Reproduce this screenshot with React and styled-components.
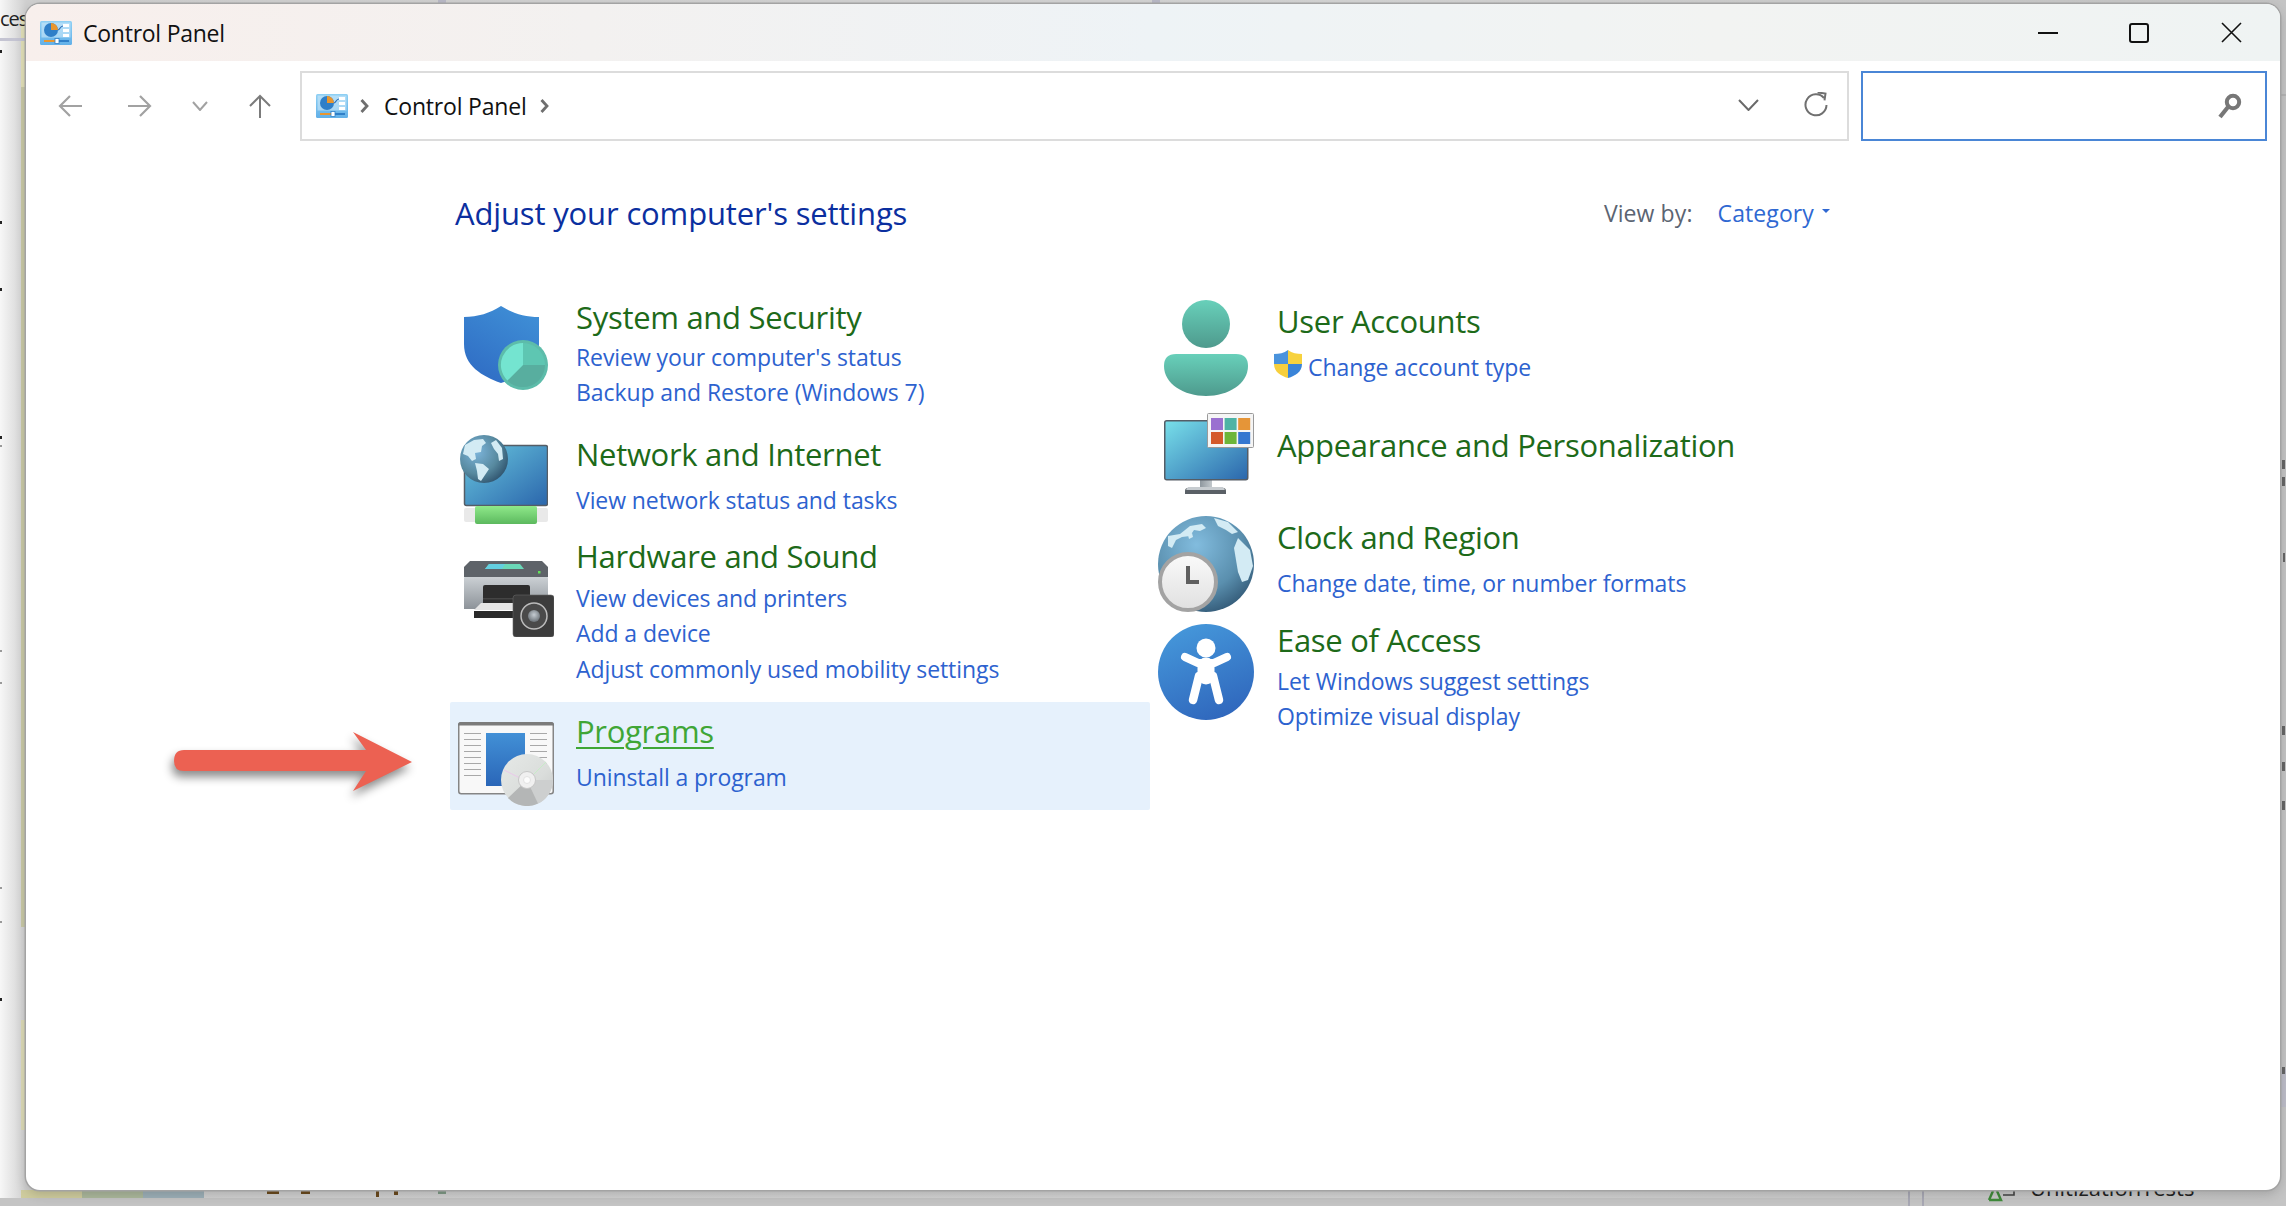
import React from 'react';
import styled, { createGlobalStyle } from 'styled-components';

const UI_FONT = '"Open Sans", "Noto Sans", "Liberation Sans", sans-serif';

const GlobalStyle = createGlobalStyle`
  html, body {
    margin: 0;
    padding: 0;
    width: 2286px;
    height: 1206px;
    overflow: hidden;
    font-family: ${UI_FONT};
  }
`;

const Page = styled.div`
  position: relative;
  box-sizing: border-box;
  width: 2286px;
  height: 1206px;
  padding: 4px 6px 16px 26px;
  overflow: hidden;
  background: linear-gradient(90deg, #f7f7f7 0, #cfcfcf 26px, #d4d4d4 60%, #c4c4c4 100%);
`;

// bits of the desktop showing behind the window
const BackdropBar = styled.div`
  position: absolute;
  left: ${p => p.$x}px;
  top: ${p => p.$y}px;
  width: ${p => p.$w}px;
  height: ${p => p.$h}px;
  background: ${p => p.$c};
`;

const BackdropText = styled.span`
  position: absolute;
  left: ${p => p.$x}px;
  top: ${p => p.$y}px;
  font-size: ${p => p.$size}px;
  letter-spacing: ${p => p.$track || 0}px;
  line-height: 30px;
  color: #222;
  white-space: nowrap;
`;

const BackdropIcon = styled.svg`
  position: absolute;
  left: ${p => p.$x}px;
  top: ${p => p.$y}px;
`;

const Window = styled.div`
  position: relative;
  display: flex;
  flex-direction: column;
  height: 100%;
  background: #fff;
  border-radius: 14px;
  overflow: hidden;
  box-shadow: 0 0 0 1.5px #a3a3a3, 0 4px 12px rgba(0, 0, 0, 0.18);
`;

const TitleBar = styled.div`
  display: flex;
  align-items: center;
  flex: none;
  height: 57px;
  padding: 0 2px 0 14px;
  background: linear-gradient(90deg, #f8efec 0, #f3f1f0 25%, #eef3f6 50%, #f2f3f2 75%, #eff3f3 100%);
`;

const WindowTitle = styled.span`
  margin-left: 11px;
  font-size: 23px;
  letter-spacing: -0.25px;
  color: #111;
  flex: 1;
`;

const WindowButton = styled.div`
  display: flex;
  align-items: center;
  justify-content: center;
  width: ${p => p.$w}px;
  height: 57px;
`;

const Toolbar = styled.div`
  display: flex;
  flex: none;
  align-items: stretch;
  height: 70px;
  margin-top: 10px;
  padding-right: 13px;
`;

const NavGroup = styled.div`
  display: grid;
  flex: none;
  grid-template-columns: 80px 60px 60px 60px;
  width: 270px;
  padding-left: 4px;
`;

const NavButton = styled.div`
  display: flex;
  align-items: center;
  justify-content: center;
`;

const AddressBar = styled.div`
  display: flex;
  align-items: center;
  flex: 1;
  padding: 0 19px 0 14px;
  border: 2px solid #dcdcdc;
`;

const Gap = styled.span`
  flex: none;
  width: ${p => p.$w}px;
`;

const Raised = styled.span`
  display: inline-flex;
  margin-bottom: 3px;
`;

const Crumb = styled.span`
  margin: 0 13px 0 15px;
  font-size: 23px;
  letter-spacing: -0.2px;
  color: #111;
`;

const AddressSpacer = styled.div`
  flex: 1;
`;

const SearchBox = styled.div`
  display: flex;
  align-items: center;
  justify-content: flex-end;
  flex: none;
  box-sizing: border-box;
  width: 406px;
  margin-left: 12px;
  padding-right: 23px;
  border: 2px solid #4a86d6;
`;

const HeadRow = styled.div`
  display: flex;
  align-items: center;
  justify-content: space-between;
  width: 1375px;
  height: 40px;
  margin: 52px 0 0 429px;
`;

const Heading = styled.h1`
  margin: 0;
  font-size: 31px;
  font-weight: 400;
  letter-spacing: -0.15px;
  color: #0b2f9f;
`;

const ViewBy = styled.div`
  display: flex;
  align-items: center;
  font-size: 23px;
  letter-spacing: 0.1px;
  color: #5b6472;
`;

const ViewByValue = styled.span`
  margin-left: 25px;
  color: #2f68d2;
`;

const ViewByCaret = styled.span`
  width: 0;
  height: 0;
  margin: 0 0 4px 8px;
  border-left: 4px solid transparent;
  border-right: 4px solid transparent;
  border-top: 4px solid #2f68d2;
`;

const Columns = styled.div`
  display: flex;
  margin: 67px 0 0 424px;
`;

const Column = styled.div`
  display: flex;
  flex-direction: column;
  flex: none;
  width: 700px;
`;

const Item = styled.div`
  display: grid;
  grid-template-columns: ${p => p.$iconCol || 126}px 1fr;
  height: ${p => p.$h}px;
  border-radius: 2px;
  background: ${p => (p.$active ? '#e6f1fc' : 'transparent')};
`;

const IconCell = styled.div`
  margin: ${p => p.$y || 0}px 0 0 ${p => p.$x || 14}px;
  line-height: 0;
`;

const TextCell = styled.div`
  padding-top: ${p => p.$pad || 0}px;
`;

const ItemTitle = styled.a`
  display: block;
  width: max-content;
  height: 36px;
  margin: -1px 0 ${p => (p.$gap || 9) + 1}px;
  font-size: 31px;
  line-height: 36px;
  letter-spacing: -0.3px;
  color: ${p => (p.$active ? '#3fa636' : '#1d6a19')};
  text-decoration: ${p => (p.$active ? 'underline' : 'none')};
  text-decoration-thickness: 2px;
  text-underline-offset: 4px;
`;

const ItemLink = styled.a`
  display: flex;
  align-items: center;
  height: 35.5px;
  font-size: 23px;
  letter-spacing: -0.08px;
  color: #2d62cf;
  text-decoration: none;
  white-space: nowrap;
`;

const ShieldSlot = styled.span`
  display: inline-flex;
  margin: -5px 6px 0 -3px;
`;

const ArrowMark = styled.svg`
  position: absolute;
  left: 148px;
  top: 724px;
  overflow: visible;
  filter: drop-shadow(-2px 6px 5px rgba(0, 0, 0, 0.45));
`;

const stroke = { fill: 'none', strokeLinecap: 'round', strokeLinejoin: 'round' };

function ControlPanelIcon() {
  return (
    <svg width="32" height="24" viewBox="0 0 32 24">
      <defs>
        <linearGradient id="cpBg" x1="0" y1="0" x2="0" y2="1">
          <stop offset="0" stopColor="#8fd0f4" />
          <stop offset="1" stopColor="#62b0e8" />
        </linearGradient>
      </defs>
      <rect width="32" height="24" rx="1.5" fill="url(#cpBg)" />
      <rect x="1.5" y="1.5" width="29" height="15" fill="#d5edfb" opacity="0.55" />
      <circle cx="11" cy="9" r="7" fill="#2f7fc8" />
      <path d="M11 2 A7 7 0 0 1 18 9 H11Z" fill="#e8962f" />
      <path d="M18 9 C20 9 20 5 23 5" stroke="#2f6fb8" strokeWidth="1.2" fill="none" />
      <rect x="23" y="3" width="6" height="3" fill="#fff" />
      <rect x="23" y="8" width="6" height="3" fill="#fff" />
      <rect x="23" y="13" width="6" height="3" fill="#fff" />
      <rect x="4" y="19" width="13" height="2" fill="#e8962f" />
      <rect x="17" y="19" width="12" height="2" fill="#2f7fc8" />
      <rect x="15" y="17.5" width="4" height="5" fill="#fff" stroke="#2f7fc8" strokeWidth="0.8" />
    </svg>
  );
}

function ShieldIcon() {
  return (
    <svg width="84" height="84" viewBox="0 0 84 84">
      <defs>
        <linearGradient id="shieldBlue" x1="0.8" y1="0" x2="0.2" y2="1">
          <stop offset="0" stopColor="#3f8fd6" />
          <stop offset="1" stopColor="#2f6cc4" />
        </linearGradient>
      </defs>
      <path d="M0 11 C14 11 26 7 37 0 C48 7 60 11 75 11 V38 C75 60 56 72 37 77 C18 70 0 60 0 38Z" fill="url(#shieldBlue)" />
      <circle cx="59" cy="59" r="25" fill="#5dbcaa" />
      <path d="M59 37 A22 22 0 0 1 81 59 H59Z" fill="#5ec6b2" />
      <path d="M81 59 A22 22 0 0 1 43.4 74.6 L59 59Z" fill="#58ae9f" />
      <path d="M43.4 74.6 A22 22 0 0 1 59 37 V59Z" fill="#74e4d0" />
    </svg>
  );
}

function Continents({ variant }) {
  if (variant === 'west') {
    return (
      <g fill="#d3ebf4">
        <path d="M5 10 L14 5 L23 4 L26 8 L22 11 L21 17 L15 18 L16 24 L12 26 L8 21 L3 19Z" />
        <path d="M15 28 L23 29 L29 34 L25 40 L21 46 L18 44 L17 36Z" />
        <path d="M36 5 L42 13 L43 24 L39 26 L38 19 L34 14 L31 8Z" />
      </g>
    );
  }
  return (
    <g fill="#d3ebf4">
      <path d="M10 30 L10 20 L22 18 L32 10 L44 8 L48 12 L42 15 L36 14 L32 20 L24 21 L18 24 L14 32Z" />
      <path d="M30 19 L34 17 L35 21 L31 23Z" />
      <path d="M56 2 L70 6 L80 16 L74 18 L68 14 L60 10Z" />
      <path d="M80 22 L92 34 L95 50 L90 64 L84 66 L80 56 L78 44 L76 32Z" />
    </g>
  );
}

function NetworkIcon() {
  return (
    <svg width="88" height="89" viewBox="0 0 88 89">
      <defs>
        <linearGradient id="netScreen" x1="0" y1="0" x2="1" y2="1">
          <stop offset="0" stopColor="#68c6de" />
          <stop offset="1" stopColor="#2b66ac" />
        </linearGradient>
        <radialGradient id="netGlobe" cx="0.35" cy="0.35" r="0.75">
          <stop offset="0" stopColor="#7cb4da" />
          <stop offset="0.6" stopColor="#57899f" />
          <stop offset="1" stopColor="#2c4f6a" />
        </radialGradient>
        <linearGradient id="netBar" x1="0" y1="0" x2="0" y2="1">
          <stop offset="0" stopColor="#8fe98a" />
          <stop offset="1" stopColor="#5cb95e" />
        </linearGradient>
      </defs>
      <rect x="4.5" y="10.5" width="83" height="60" rx="2" fill="url(#netScreen)" stroke="#555d66" strokeWidth="1.5" />
      <rect x="4" y="73" width="84" height="14" rx="2" fill="#e9e9e9" />
      <rect x="15" y="71" width="62" height="18" rx="2" fill="url(#netBar)" />
      <circle cx="24" cy="24" r="24" fill="url(#netGlobe)" />
      <Continents variant="west" />
    </svg>
  );
}

function PrinterIcon() {
  return (
    <svg width="90" height="76" viewBox="0 0 90 76">
      <defs>
        <linearGradient id="printBody" x1="0" y1="0" x2="0" y2="1">
          <stop offset="0" stopColor="#cdd2d6" />
          <stop offset="1" stopColor="#8d9399" />
        </linearGradient>
        <radialGradient id="printCone" cx="0.5" cy="0.4" r="0.6">
          <stop offset="0" stopColor="#c5ccd2" />
          <stop offset="1" stopColor="#6b7278" />
        </radialGradient>
      </defs>
      <path d="M2 15 H82 Q84 15 84 17 V48 H0 V17 Q0 15 2 15Z" fill="url(#printBody)" />
      <path d="M6 0 H78 L84 6 V16 H0 V6Z" fill="#5e6369" />
      <path d="M25 3 H56 L60 8 H21Z" fill="#6ad8b8" />
      <path d="M25 3 H41 L38 8 H21Z" fill="#63cfe0" />
      <rect x="74" y="10" width="2.5" height="2.5" fill="#62e25a" />
      <rect x="19" y="24" width="47" height="24" rx="2" fill="#2d2d2d" />
      <rect x="19" y="37" width="47" height="1.5" fill="#454545" />
      <rect x="10" y="50" width="46" height="7" fill="#2a2a2a" />
      <path d="M17 42 H52 V49 H10Z" fill="#e4e4e4" />
      <rect x="49" y="34" width="41" height="42" rx="3" fill="#3c3c3c" stroke="#666" strokeWidth="0.6" />
      <circle cx="70" cy="55" r="13" fill="#4a4a4a" stroke="#bcbcbc" strokeWidth="1.5" />
      <circle cx="70" cy="55" r="6" fill="url(#printCone)" />
    </svg>
  );
}

function ProgramsIcon() {
  const rows = [11, 17, 23, 29, 35, 41, 47, 53];
  return (
    <svg width="96" height="84" viewBox="0 0 96 84">
      <defs>
        <linearGradient id="progBlue" x1="0" y1="0" x2="0" y2="1">
          <stop offset="0" stopColor="#4290d6" />
          <stop offset="1" stopColor="#2a66b8" />
        </linearGradient>
        <linearGradient id="progDisc" x1="0" y1="0" x2="1" y2="1">
          <stop offset="0" stopColor="#e6e9e7" />
          <stop offset="0.6" stopColor="#dadddb" />
          <stop offset="1" stopColor="#c6c8c8" />
        </linearGradient>
      </defs>
      <rect x="0.75" y="0.75" width="94.5" height="71" rx="2.5" fill="#f8f8f8" stroke="#858585" strokeWidth="1.5" />
      <path d="M0 3 Q0 0 3 0 H93 Q96 0 96 3 V3.5 H0Z" fill="#7b7b7b" />
      {rows.map(y => (
        <g key={y} fill="#a8a8a8">
          <rect x="6" y={y} width="17" height="1" />
          <rect x="72" y={y} width="17" height="1" />
        </g>
      ))}
      <rect x="28" y="11" width="39" height="53" fill="url(#progBlue)" />
      <circle cx="69" cy="58" r="26" fill="url(#progDisc)" />
      <path d="M69 58 L95 58 A26 26 0 0 1 80 81.5Z" fill="#cdcfcf" />
      <path d="M69 58 L80 81.5 A26 26 0 0 1 50 76Z" fill="#b4b6b6" />
      <path d="M46 48 L62 56" stroke="#eac8ea" strokeWidth="1" />
      <path d="M76 52 L88 40" stroke="#c8ecc8" strokeWidth="1" />
      <circle cx="69" cy="58" r="8.5" fill="#f0f0f0" stroke="#c6c6c6" />
      <circle cx="69" cy="58" r="3.5" fill="#fcfcfc" stroke="#e2e2e2" />
    </svg>
  );
}

function UserIcon() {
  return (
    <svg width="84" height="96" viewBox="0 0 84 96">
      <defs>
        <linearGradient id="userHead" x1="0" y1="0" x2="0" y2="1">
          <stop offset="0" stopColor="#68d0ba" />
          <stop offset="1" stopColor="#4e9a8d" />
        </linearGradient>
      </defs>
      <circle cx="42" cy="24" r="24" fill="url(#userHead)" />
      <path d="M12 54 H72 Q84 54 84 66 C84 84 64 96 42 96 C20 96 0 84 0 66 Q0 54 12 54Z" fill="url(#userHead)" />
    </svg>
  );
}

function SmallShield() {
  return (
    <svg width="28" height="28" viewBox="0 0 28 28">
      <path d="M14 0 C18 3 23 4 28 4 V14 H14Z" fill="#f7d23e" />
      <path d="M14 0 C10 3 5 4 0 4 V14 H14Z" fill="#4a93dc" />
      <path d="M0 14 H14 V28 C7 26 0 22 0 14Z" fill="#f7cf3c" />
      <path d="M28 14 H14 V28 C21 26 28 22 28 14Z" fill="#3a84d8" />
    </svg>
  );
}

function AppearanceIcon() {
  const cells = ['#9a70d0', '#4fb3a5', '#e59538', '#d45a2b', '#6db539', '#3577d0'];
  return (
    <svg width="90" height="81" viewBox="0 0 90 81">
      <defs>
        <linearGradient id="appScreen" x1="0" y1="0" x2="1" y2="1">
          <stop offset="0" stopColor="#78e0ea" />
          <stop offset="1" stopColor="#2b66ac" />
        </linearGradient>
        <linearGradient id="appStand" x1="0" y1="0" x2="1" y2="0">
          <stop offset="0" stopColor="#8e979e" />
          <stop offset="1" stopColor="#c2c8cc" />
        </linearGradient>
      </defs>
      <rect x="36" y="66" width="12" height="10" fill="url(#appStand)" />
      <path d="M24 75 H59 Q62 75 62 78 V81 H21 V78 Q21 75 24 75Z" fill="#5a6066" />
      <path d="M24 74 H59 L61 77 H22Z" fill="#c7ccd0" />
      <rect x="0.75" y="7.75" width="83" height="59" rx="2" fill="url(#appScreen)" stroke="#555d66" strokeWidth="1.5" />
      <rect x="43.5" y="0.5" width="46" height="34" rx="1" fill="#f5f5f5" stroke="#9a9a9a" />
      {cells.map((c, i) => (
        <rect key={c} x={47 + (i % 3) * 13.6} y={5 + Math.floor(i / 3) * 14} width="12" height="12" fill={c} />
      ))}
    </svg>
  );
}

function ClockGlobeIcon() {
  return (
    <svg width="96" height="96" viewBox="0 0 96 96">
      <defs>
        <radialGradient id="clockGlobe" cx="0.4" cy="0.3" r="0.8">
          <stop offset="0" stopColor="#82bcde" />
          <stop offset="0.6" stopColor="#5a8fae" />
          <stop offset="1" stopColor="#2b4f6c" />
        </radialGradient>
        <linearGradient id="clockFace" x1="0" y1="0" x2="0" y2="1">
          <stop offset="0" stopColor="#fafafa" />
          <stop offset="1" stopColor="#e0e0e0" />
        </linearGradient>
      </defs>
      <circle cx="48" cy="48" r="48" fill="url(#clockGlobe)" />
      <Continents variant="east" />
      <circle cx="30" cy="66" r="28" fill="url(#clockFace)" stroke="#a3a3a3" strokeWidth="4" />
      <path d="M30 50 V66 H41" stroke="#5f5f5f" strokeWidth="4" fill="none" />
    </svg>
  );
}

function EaseIcon() {
  return (
    <svg width="96" height="96" viewBox="0 0 96 96">
      <defs>
        <linearGradient id="easeBg" x1="0.3" y1="0" x2="0.7" y2="1">
          <stop offset="0" stopColor="#4597da" />
          <stop offset="1" stopColor="#2f66bc" />
        </linearGradient>
      </defs>
      <circle cx="48" cy="48" r="48" fill="url(#easeBg)" />
      <circle cx="48" cy="24" r="9.5" fill="#fff" />
      <path d="M27 33 L40 39 H56 L69 33" stroke="#fff" strokeWidth="8" {...stroke} />
      <path d="M48 42 V52" stroke="#fff" strokeWidth="17" {...stroke} />
      <path d="M41 52 L35 76 M55 52 L61 76" stroke="#fff" strokeWidth="8.5" {...stroke} />
    </svg>
  );
}

function NavArrow({ d }) {
  return (
    <svg width="24" height="24" viewBox="0 0 24 24">
      <path d={d} stroke="#a2a2a2" strokeWidth="2.2" fill="none" />
    </svg>
  );
}

function UpArrow() {
  return (
    <svg width="22" height="24" viewBox="0 0 22 24">
      <path d="M11 24 V2 M1 12 L11 2 L21 12" stroke="#7b7b7b" strokeWidth="2" fill="none" />
    </svg>
  );
}

function Chevron({ w, h, color, sw = 2 }) {
  return (
    <svg width={w} height={h} viewBox={`0 0 ${w} ${h}`}>
      <path d={`M1 1 L${w / 2} ${h - 1} L${w - 1} 1`} stroke={color} strokeWidth={sw} fill="none" />
    </svg>
  );
}

function CrumbArrow() {
  return (
    <svg width="9" height="16" viewBox="0 0 9 16">
      <path d="M1.5 2 L7 8 L1.5 14" stroke="#6f6f6f" strokeWidth="2.8" fill="none" />
    </svg>
  );
}

function RefreshIcon() {
  return (
    <svg width="24" height="26" viewBox="0 0 24 26">
      <path d="M20 6 A10.5 10.5 0 1 0 22.5 13" stroke="#707070" strokeWidth="2" fill="none" />
      <path d="M13 1.5 L21 1.5 L21 8.5" stroke="#707070" strokeWidth="2" fill="none" transform="rotate(8 21 5)" />
    </svg>
  );
}

function SearchIcon() {
  return (
    <svg width="24" height="26" viewBox="0 0 24 26">
      <circle cx="15" cy="9" r="6.2" stroke="#777" strokeWidth="4" fill="none" />
      <path d="M10 14 L2 24" stroke="#777" strokeWidth="4.2" fill="none" />
    </svg>
  );
}

const items = {
  left: [
    {
      title: 'System and Security', h: 137, gap: 3, icon: <ShieldIcon />, x: 14, y: 6,
      links: ["Review your computer's status", 'Backup and Restore (Windows 7)'],
    },
    {
      title: 'Network and Internet', h: 102, gap: 9, icon: <NetworkIcon />, x: 10, y: -2,
      links: ['View network status and tasks'],
    },
    {
      title: 'Hardware and Sound', h: 163, gap: 5, icon: <PrinterIcon />, x: 14, y: 22,
      links: ['View devices and printers', 'Add a device', 'Adjust commonly used mobility settings'],
    },
    {
      title: 'Programs', h: 108, gap: 9, pad: 12, active: true, icon: <ProgramsIcon />, x: 8, y: 20,
      links: ['Uninstall a program'],
    },
  ],
  right: [
    {
      title: 'User Accounts', h: 113, gap: 9, pad: 4, icon: <UserIcon />, x: 14, y: 0,
      links: ['Change account type'], shield: true,
    },
    {
      title: 'Appearance and Personalization', h: 103, pad: 15, icon: <AppearanceIcon />, x: 14, y: 0,
      links: [],
    },
    {
      title: 'Clock and Region', h: 107, gap: 9, pad: 4, icon: <ClockGlobeIcon />, x: 8, y: 0,
      links: ['Change date, time, or number formats'],
    },
    {
      title: 'Ease of Access', h: 110, gap: 4, icon: <EaseIcon />, x: 8, y: 1,
      links: ['Let Windows suggest settings', 'Optimize visual display'],
    },
  ],
};

const backdropBars = [
  [21, 17, 5, 70, '#e2e0b8'],
  [21, 87, 5, 840, '#c9c9a6'],
  [21, 1020, 5, 110, '#dcdab6'],
  [21, 1190, 61, 8, '#cfcc9e'],
  [82, 1190, 61, 8, '#acb89c'],
  [143, 1190, 61, 8, '#9db0b8'],
  [0, 1198, 2286, 8, '#c4c4c4'],
  [0, 38, 26, 3, '#c4c4d2'],
  [438, 0, 8, 5, '#b8b8c6'],
  [1152, 0, 8, 5, '#b8b8c6'],
  [2280, 1069, 6, 38, '#bdbdc8'],
  [2280, 94, 6, 2, '#b4b4b4'],
  [1908, 1190, 2, 16, '#a8a8b4'],
  [1922, 1190, 2, 16, '#a8a8b4'],
  [267, 1191, 12, 3, '#6b4a1e'],
  [301, 1191, 9, 3, '#6b4a1e'],
  [376, 1191, 3, 6, '#6b4a1e'],
  [394, 1191, 4, 4, '#6b4a1e'],
  [438, 1191, 8, 3, '#7f9a86'],
  // ends of lines cut off at the screen edges
  [0, 50, 2, 3, '#222'],
  [0, 221, 2, 3, '#222'],
  [0, 288, 2, 3, '#222'],
  [0, 436, 2, 3, '#222'],
  [0, 445, 2, 2, '#999'],
  [0, 650, 2, 2, '#999'],
  [0, 682, 2, 2, '#999'],
  [0, 887, 2, 2, '#999'],
  [0, 921, 2, 2, '#999'],
  [0, 998, 2, 3, '#222'],
  [2282, 460, 3, 9, '#666'],
  [2282, 477, 3, 9, '#666'],
  [2283, 553, 2, 9, '#666'],
  [2282, 726, 3, 9, '#666'],
  [2282, 762, 3, 9, '#666'],
  [2282, 801, 3, 9, '#666'],
  [2282, 1067, 3, 7, '#666'],
];

function CategoryItem({ item, iconCol }) {
  return (
    <Item $h={item.h} $active={item.active} $iconCol={iconCol}>
      <IconCell $x={item.x} $y={item.y}>{item.icon}</IconCell>
      <TextCell $pad={item.pad}>
        <ItemTitle href="#" $gap={item.gap} $active={item.active}>{item.title}</ItemTitle>
        {item.links.map(link => (
          <ItemLink href="#" key={link}>
            {item.shield && <ShieldSlot><SmallShield /></ShieldSlot>}
            {link}
          </ItemLink>
        ))}
      </TextCell>
    </Item>
  );
}

export default function App() {
  return (
    <>
      <GlobalStyle />
      <Page>
        {backdropBars.map(([x, y, w, h, c]) => (
          <BackdropBar key={`${x}-${y}`} $x={x} $y={y} $w={w} $h={h} $c={c} />
        ))}
        <BackdropText $x={0} $y={4} $size={20} $track={-1}>ces</BackdropText>
        <BackdropText $x={2030} $y={1172} $size={22}>UnitizationTests</BackdropText>
        <BackdropIcon $x={1985} $y={1190} width="34" height="12" viewBox="0 0 34 12">
          <path d="M4 10 L8 1 M12 1 L16 10 H4" stroke="#3f8a3a" strokeWidth="2.4" fill="none" />
          <path d="M18 5 H29 V1" stroke="#444" strokeWidth="1.6" fill="none" />
        </BackdropIcon>
        <Window>
          <TitleBar>
            <ControlPanelIcon />
            <WindowTitle>Control Panel</WindowTitle>
            <WindowButton $w={90}>
              <svg width="20" height="2" viewBox="0 0 20 2"><rect width="20" height="2" fill="#111" /></svg>
            </WindowButton>
            <WindowButton $w={92}>
              <svg width="20" height="20" viewBox="0 0 20 20"><rect x="1" y="1" width="18" height="18" rx="2" stroke="#111" strokeWidth="2" fill="none" /></svg>
            </WindowButton>
            <WindowButton $w={93}>
              <svg width="21" height="21" viewBox="0 0 21 21"><path d="M1 1 L20 20 M20 1 L1 20" stroke="#111" strokeWidth="1.6" /></svg>
            </WindowButton>
          </TitleBar>
          <Toolbar>
            <NavGroup>
              <NavButton><NavArrow d="M24 12 H2 M12 2 L2 12 L12 22" /></NavButton>
              <NavButton><NavArrow d="M0 12 H22 M12 2 L22 12 L12 22" /></NavButton>
              <NavButton><Chevron w={16} h={10} color="#a2a2a2" /></NavButton>
              <NavButton><UpArrow /></NavButton>
            </NavGroup>
            <AddressBar>
              <ControlPanelIcon />
              <Gap $w={12} />
              <CrumbArrow />
              <Crumb>Control Panel</Crumb>
              <CrumbArrow />
              <AddressSpacer />
              <Raised><Chevron w={21} h={12} color="#6a6a6a" /></Raised>
              <Gap $w={45} />
              <Raised><RefreshIcon /></Raised>
            </AddressBar>
            <SearchBox><SearchIcon /></SearchBox>
          </Toolbar>
          <HeadRow>
            <Heading>Adjust your computer's settings</Heading>
            <ViewBy>
              View by:
              <ViewByValue>Category</ViewByValue>
              <ViewByCaret />
            </ViewBy>
          </HeadRow>
          <Columns>
            <Column>
              {items.left.map(item => <CategoryItem key={item.title} item={item} />)}
            </Column>
            <Column>
              {items.right.map(item => <CategoryItem key={item.title} item={item} iconCol={127} />)}
            </Column>
          </Columns>
          <ArrowMark width="238" height="62" viewBox="0 0 238 62">
            <path d="M10 22 L192 22 L179 4 L238 34 L179 63 L192 43 L10 43 Q0 43 0 33 Q0 22 10 22Z" fill="#ec6152" />
          </ArrowMark>
        </Window>
      </Page>
    </>
  );
}
